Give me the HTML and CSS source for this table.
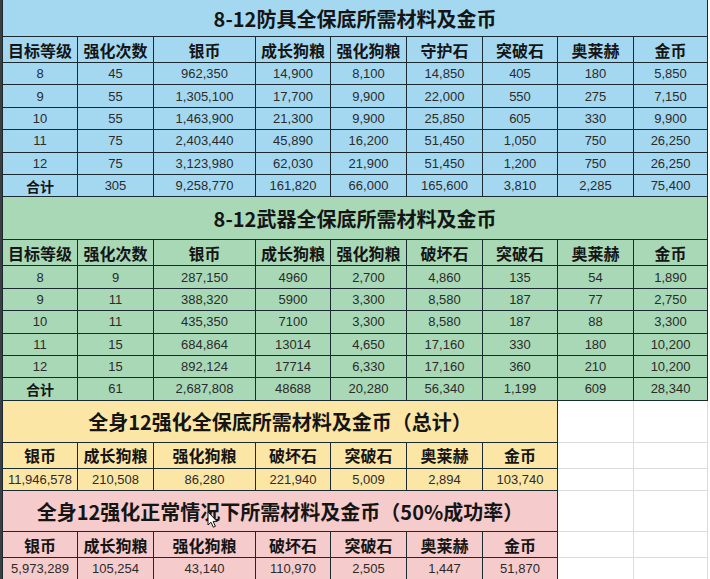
FILE: index.html
```html
<!DOCTYPE html>
<html lang="zh">
<head>
<meta charset="utf-8">
<title>强化材料</title>
<link rel="stylesheet" href="styles.css">
</head>
<body>
<div class="sheet">
  <div class="gutter"></div>
  <div class="area">
    <table class="grid">
      <colgroup>
        <col class="w75"><col class="w76"><col class="w102"><col class="w75"><col class="w76"><col class="w76"><col class="w75"><col class="w76"><col class="w74">
      </colgroup>
      <tbody>
        <tr class="title first blue"><td colspan="9">8-12防具全保底所需材料及金币</td></tr>
        <tr class="hdr blue"><th>目标等级</th><th>强化次数</th><th>银币</th><th>成长狗粮</th><th>强化狗粮</th><th>守护石</th><th>突破石</th><th>奥莱赫</th><th>金币</th></tr>
        <tr class="row blue"><td>8</td><td>45</td><td>962,350</td><td>14,900</td><td>8,100</td><td>14,850</td><td>405</td><td>180</td><td>5,850</td></tr>
        <tr class="row blue"><td>9</td><td>55</td><td>1,305,100</td><td>17,700</td><td>9,900</td><td>22,000</td><td>550</td><td>275</td><td>7,150</td></tr>
        <tr class="row blue"><td>10</td><td>55</td><td>1,463,900</td><td>21,300</td><td>9,900</td><td>25,850</td><td>605</td><td>330</td><td>9,900</td></tr>
        <tr class="row blue"><td>11</td><td>75</td><td>2,403,440</td><td>45,890</td><td>16,200</td><td>51,450</td><td>1,050</td><td>750</td><td>26,250</td></tr>
        <tr class="row blue"><td>12</td><td>75</td><td>3,123,980</td><td>62,030</td><td>21,900</td><td>51,450</td><td>1,200</td><td>750</td><td>26,250</td></tr>
        <tr class="row blue"><td class="sum">合计</td><td>305</td><td>9,258,770</td><td>161,820</td><td>66,000</td><td>165,600</td><td>3,810</td><td>2,285</td><td>75,400</td></tr>

        <tr class="title t2 green"><td colspan="9">8-12武器全保底所需材料及金币</td></tr>
        <tr class="hdr green"><th>目标等级</th><th>强化次数</th><th>银币</th><th>成长狗粮</th><th>强化狗粮</th><th>破坏石</th><th>突破石</th><th>奥莱赫</th><th>金币</th></tr>
        <tr class="row green"><td>8</td><td>9</td><td>287,150</td><td>4960</td><td>2,700</td><td>4,860</td><td>135</td><td>54</td><td>1,890</td></tr>
        <tr class="row green"><td>9</td><td>11</td><td>388,320</td><td>5900</td><td>3,300</td><td>8,580</td><td>187</td><td>77</td><td>2,750</td></tr>
        <tr class="row green"><td>10</td><td>11</td><td>435,350</td><td>7100</td><td>3,300</td><td>8,580</td><td>187</td><td>88</td><td>3,300</td></tr>
        <tr class="row green"><td>11</td><td>15</td><td>684,864</td><td>13014</td><td>4,650</td><td>17,160</td><td>330</td><td>180</td><td>10,200</td></tr>
        <tr class="row green"><td>12</td><td>15</td><td>892,124</td><td>17714</td><td>6,330</td><td>17,160</td><td>360</td><td>210</td><td>10,200</td></tr>
        <tr class="row green"><td class="sum">合计</td><td>61</td><td>2,687,808</td><td>48688</td><td>20,280</td><td>56,340</td><td>1,199</td><td>609</td><td>28,340</td></tr>

        <tr class="title t3 yellow"><td colspan="7">全身12强化全保底所需材料及金币（总计）</td><td class="blank"></td><td class="blank"></td></tr>
        <tr class="hdr yellow"><th>银币</th><th>成长狗粮</th><th>强化狗粮</th><th>破坏石</th><th>突破石</th><th>奥莱赫</th><th>金币</th><td class="blank"></td><td class="blank"></td></tr>
        <tr class="row yellow"><td>11,946,578</td><td>210,508</td><td>86,280</td><td>221,940</td><td>5,009</td><td>2,894</td><td>103,740</td><td class="blank"></td><td class="blank"></td></tr>

        <tr class="title t4 pink"><td colspan="7" class="cursor-host">全身12强化正常情况下所需材料及金币（50%成功率）</td><td class="blank"></td><td class="blank"></td></tr>
        <tr class="hdr pink"><th>银币</th><th>成长狗粮</th><th>强化狗粮</th><th>破坏石</th><th>突破石</th><th>奥莱赫</th><th>金币</th><td class="blank"></td><td class="blank"></td></tr>
        <tr class="row pink"><td>5,973,289</td><td>105,254</td><td>43,140</td><td>110,970</td><td>2,505</td><td>1,447</td><td>51,870</td><td class="blank"></td><td class="blank"></td></tr>
      </tbody>
    </table>
    <svg class="cursor" width="12" height="18" viewBox="0 0 12 18" aria-hidden="true">
      <path d="M1 1 L1 14 L4 11.2 L6.3 16.2 L8.4 15.3 L6.1 10.4 L10 10.4 Z" fill="#fff" stroke="#111" stroke-width="1" stroke-linejoin="round"/>
    </svg>
  </div>
</div>
</body>
</html>
```

FILE: styles.css
```css
html, body {
  margin: 0;
  padding: 0;
  background: #ffffff;
}

.sheet {
  display: flex;
  width: 710px;
  height: 579px;
  overflow: hidden;
}

.gutter {
  width: 2px;
  flex: 0 0 2px;
  background: #3c3f42;
}

.area {
  position: relative;
  flex: 1 1 auto;
}

.grid {
  border-collapse: collapse;
  table-layout: fixed;
  width: 706px;
  font-family: "Liberation Sans", "Noto Sans CJK SC", sans-serif;
  color: #2b2b2b;
}

.w75 { width: 75px; }
.w76 { width: 76px; }
.w102 { width: 102px; }
.w74 { width: 74px; }

.grid td,
.grid th {
  border: 1px solid #1b2a30;
  padding: 0;
  text-align: center;
  vertical-align: middle;
  white-space: nowrap;
  overflow: hidden;
}

.blue td, .blue th { background: #a4d8f1; }
.green td, .green th { background: #a8d8b5; }
.yellow td, .yellow th { background: #fce6a6; }
.pink td, .pink th { background: #f6cbcb; }

.grid td.blank {
  background: #ffffff;
  border: 1px solid #dcdcdc;
}

.title td {
  font-family: "Noto Sans CJK SC", "Liberation Sans", sans-serif;
  font-weight: 700;
  font-size: 20px;
  color: #151515;
  height: 41px;
}

.title.first td {
  height: 36px;
  border-top: none;
}

.title.t2 td { height: 42px; }
.title.t3 td { height: 41px; }
.title.t4 td { height: 40px; }

.hdr th {
  font-family: "Noto Sans CJK SC", "Liberation Sans", sans-serif;
  font-weight: 700;
  font-size: 16px;
  color: #151515;
  height: 25px;
}

.row td {
  font-size: 13px;
  height: 21.4px;
}

.row td.sum {
  font-family: "Noto Sans CJK SC", sans-serif;
  font-weight: 700;
  font-size: 14px;
  color: #151515;
}

.cursor {
  position: absolute;
  left: 205px;
  top: 511px;
}
```
